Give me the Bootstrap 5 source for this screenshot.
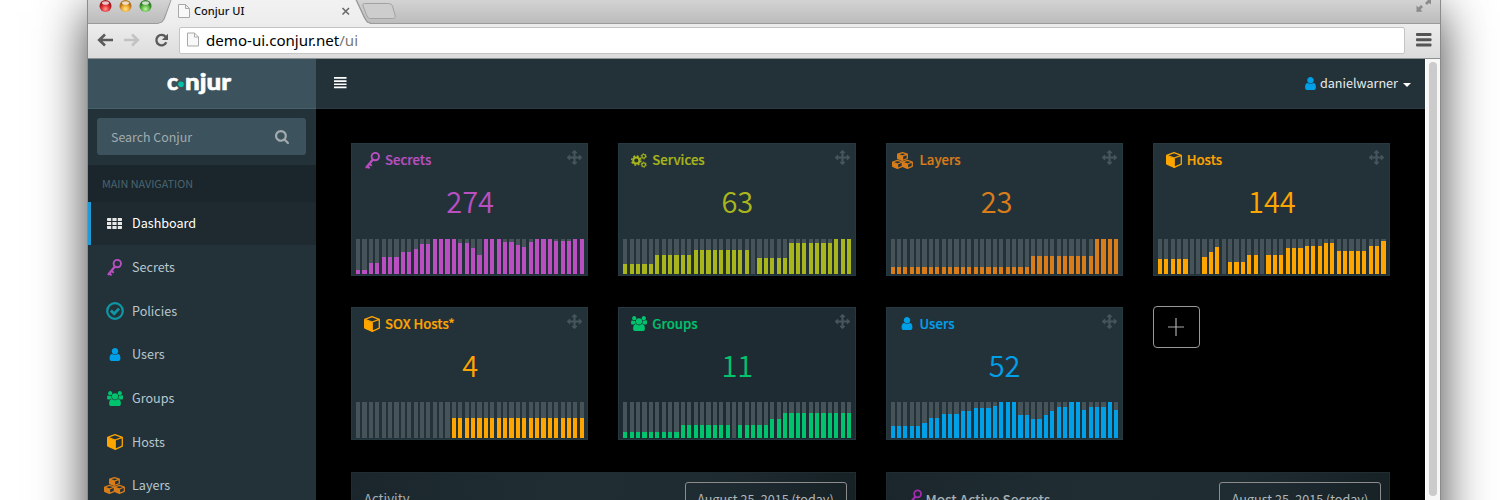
<!DOCTYPE html>
<html lang="en">
<head>
<meta charset="utf-8">
<title>Conjur UI</title>
<link rel="stylesheet" href="https://cdn.jsdelivr.net/npm/bootstrap@5.3.0/dist/css/bootstrap.min.css">
<style>
body{height:500px;overflow:hidden;background:#fff;font-family:"Noto Sans CJK SC","Source Sans Pro",sans-serif;font-size:12.6px;line-height:20px}
svg{display:block;flex:none}
.browser{width:1354px;height:800px;margin-left:87px;border:solid #8b8b8b;border-width:0 1px;box-shadow:0 12px 46px rgba(0,0,0,.75)}
.tabstrip{height:23px;background:linear-gradient(#d3d3d3,#bcbcbc)}
.tab-title{font:500 11.1px/16px "Noto Sans",sans-serif;color:#111;padding:3px 0 0 106px}
.toolbar{height:35.500px;background:linear-gradient(#ededed,#dcdcdc);border-bottom:1px solid #8d9194;padding:0 8px 0 9px}
.address{height:27px;border:1px solid #c4c4c4;border-radius:2px;font:15.1px/22px "Noto Sans",sans-serif;color:#000;padding:0 0 1px 7px}
.address span{color:#777}
.viewport{height:741px;overflow:hidden}
.sidebar{width:228px;background:#233239}
.brand{height:50px;background:#3c535d;border-bottom:1px solid #46606b}
.search{height:37px;margin:9.500px 10px 9.500px 9px;background:#3c535d;border-radius:3px;color:#a3abae;font-size:12.4px;padding:0 17px 0 14px}
.nav-head{height:37px;background:#1a262b;color:#4b646f;font-size:10.8px;padding:0 0 1px 14px}
.side-link{height:43.7px;color:#b8c7ce;border-left:3px solid transparent;padding-left:11px;gap:5px}
.side-link .ico{width:25px}
.side-link.current{color:#fff;background:#1e2a30;border-color:#1f9ad6}
.topbar{height:50px;background:#233239;color:#e8ecee;border-bottom:1px solid #2b3c44;padding:0 14px 0 18px}
.board{background:#000;padding:34.500px 35px 0}
.tiles{display:grid;grid-template-columns:repeat(4,1fr);column-gap:30px;row-gap:30.5px}
.tile{height:133px;background:#233239;border:1px solid #263940;padding:0 3px 0 4px;color:var(--c)}
.tile-top{height:32px;padding-left:3px;font-size:13.2px}
.tile-top .ico{width:26px}
.tile-top b{font-weight:500;-webkit-text-stroke:.2px}
.tile-num{font-size:29px;line-height:36px;font-weight:350;height:36px;margin-top:6px}
.bars{height:35.5px;margin-top:20.5px;justify-content:space-between}
.bars i{width:4.2px;height:100%;background:#465359;display:flex;align-items:flex-end}
.bars u{width:100%;background:var(--c);display:block}
.mover{color:#46555b;margin:-5px 2px 0 0}
.adder{width:47px;height:42px;border:1px solid #999;border-radius:4px;margin-top:-1px}
.panels{display:grid;grid-template-columns:1fr 1fr;gap:30px;margin-top:32px}
.panel{height:200px;background:linear-gradient(100deg,#1a262b,#202e34 40%,#1e2b31 70%,#151f23);color:#a5afb4;font-size:13.2px;padding:9px 8px 0 12px;border:1px solid #1f2d33}
.panel .range{width:162px;height:33px;border:1px solid #8c8c8c;border-radius:3px;color:#b0b7ba;font-size:12.6px;line-height:31px}
.scroller{width:15px;background:#f7f7f7;border-left:1px solid #fff;padding:3px 3px 0}
.thumb{width:8px;height:434px;border-radius:4px;background:#cbcbcb}
</style>
</head>
<body>
<svg width="0" height="0" class="position-absolute">
<defs>
<symbol id="user" viewBox="256 128 1280 1536"><path fill="currentColor" d="M1536 1399q0 109-62.500 187t-150.500 78h-854q-88 0-150.500-78t-62.500-187q0-85 8.500-160.500t31.500-152 58.500-131 94-89 134.500-34.500q131 128 313 128t313-128q76 0 134.500 34.500t94 89 58.500 131 31.500 152 8.500 160.500zm-256-887q0 159-112.500 271.500t-271.500 112.500-271.500-112.500-112.500-271.500 112.500-271.500 271.500-112.500 271.500 112.500 112.500 271.500z"/></symbol>
<symbol id="search" viewBox="64 128 1664 1664"><path fill="currentColor" d="M1216 832q0-185-131.500-316.500t-316.500-131.500-316.500 131.500-131.500 316.500 131.500 316.500 316.500 131.500 316.500-131.500 131.500-316.500zm512 832q0 52-38 90t-90 38q-54 0-90-38l-343-342q-179 124-399 124-143 0-273.500-55.500t-225-150-150-225-55.500-273.500 55.500-273.500 150-225 225-150 273.500-55.500 273.500 55.500 225 150 150 225 55.500 273.500q0 220-124 399l343 343q37 37 37 90z"/></symbol>
<symbol id="move" viewBox="0 0 1792 1792"><path fill="currentColor" d="M1792 896q0 26-19 45l-256 256q-19 19-45 19t-45-19-19-45v-128h-384v384h128q26 0 45 19t19 45-19 45l-256 256q-19 19-45 19t-45-19l-256-256q-19-19-19-45t19-45 45-19h128v-384h-384v128q0 26-19 45t-45 19-45-19l-256-256q-19-19-19-45t19-45l256-256q19-19 45-19t45 19 19 45v128h384v-384h-128q-26 0-45-19t-19-45 19-45l256-256q19-19 45-19t45 19l256 256q19 19 19 45t-19 45-45 19h-128v384h384v-128q0-26 19-45t45-19 45 19l256 256q19 19 19 45z"/></symbol>
<symbol id="groups" viewBox="64 0 1920 1792"><path fill="currentColor" d="M657 896q-162 5-265 128h-134q-82 0-138-40.500t-56-118.500q0-353 124-353 6 0 43.500 21t97.500 42.500 119 21.500q67 0 133-23-5 37-5 66 0 159 93 293zm1071 637q0 120-73 189.500t-194 69.500h-874q-121 0-194-69.500t-73-189.500q0-53 3.500-103.500t14-109 26.500-108.500 43-97.500 62-81 85.500-53.500 111.500-20q10 0 43 21.500t73 48 107 48 135 21.500 135-21.500 107-48 73-48 43-21.500q61 0 111.500 20t85.500 53.500 62 81 43 97.500 26.500 108.500 14 109 3.500 103.500zm-1024-1277q0 106-75 181t-181 75-181-75-75-181 75-181 181-75 181 75 75 181zm704 384q0 159-112.500 271.500t-271.500 112.500-271.500-112.500-112.500-271.500 112.500-271.500 271.500-112.500 271.500 112.500 112.500 271.500zm576 225q0 78-56 118.500t-138 40.500h-134q-103-123-265-128 93-134 93-293 0-29-5-66 66 23 133 23 59 0 119-21.500t97.500-42.500 43.500-21q124 0 124 353zm-128-609q0 106-75 181t-181 75-181-75-75-181 75-181 181-75 181 75 75 181z"/></symbol>
<symbol id="key" viewBox="0 0 15 17"><g fill="none" stroke="currentColor"><circle cx="10.300" cy="4.600" r="3.700" stroke-width="1.900"/><path stroke-width="2.300" d="M8.100 7.200 1 16"/><path stroke-width="1.900" d="M4 11.500l2.800 2.200M1.900 14l2.700 2.200"/></g></symbol>
<symbol id="cube" viewBox="0 0 16 16"><path fill="currentColor" d="M0 3.400 8.200 6.200V16L.8 12.700Q0 12.300 0 11.500z"/><path fill="none" stroke="currentColor" stroke-width="1.300" stroke-linejoin="round" d="M.7 3.300 8 .7l7.300 2.600v8.900L8.200 15.300V6z M15.300 3.300 8.200 6"/></symbol>
<symbol id="cubes" viewBox="0 0 21 17"><g id="c1"><path fill="currentColor" d="M5.200 2.300 10.500 4.300V8.700L5.200 6.500z"/><path fill="none" stroke="currentColor" stroke-width="1.250" stroke-linejoin="round" d="M5.700 2.200 10.500.6l4.800 1.600v4.300l-4.800 2L5.700 6.500zM10.500 4.200v4.300M5.700 2.200l4.800 2 4.800-2"/></g><use href="#c1" x="-5" y="7.800"/><use href="#c1" x="5" y="7.800"/></symbol>
<symbol id="cogs" viewBox="0 0 16 15"><g fill="none" stroke="currentColor"><circle cx="5.300" cy="7.500" r="3.100" stroke-width="2"/><circle cx="5.300" cy="7.500" r="4.600" stroke-width="1.500" stroke-dasharray="1.900 1.713"/><circle cx="12.700" cy="3.300" r="1.800" stroke-width="1.200"/><circle cx="12.700" cy="3.300" r="2.600" stroke-width="1" stroke-dasharray="1.300 1.423"/><circle cx="12.700" cy="11.700" r="1.800" stroke-width="1.200"/><circle cx="12.700" cy="11.700" r="2.600" stroke-width="1" stroke-dasharray="1.300 1.423"/></g></symbol>
<symbol id="check" viewBox="0 0 18 18"><circle cx="9" cy="9" r="7.800" fill="none" stroke="currentColor" stroke-width="2.200"/><path d="M4.900 8.600l3.200 3.200 5-5.200" fill="none" stroke="currentColor" stroke-width="2.800"/></symbol>
<symbol id="grid" viewBox="0 0 15 11"><path fill="currentColor" d="M.8 0h3.400v3H.8A.8.800 0 0 1 0 2.200V.8A.8.800 0 0 1 .8 0zM5.400 0h4.200v3H5.400zM10.800 0h3.400a.8.800 0 0 1 .8.800v1.400a.8.800 0 0 1-.8.800h-3.400zM0 4h4.200v3H0zM5.400 4h4.200v3H5.400zM10.800 4H15v3h-4.200zM0 8h4.200v3H.8a.8.800 0 0 1-.8-.8zM5.400 8h4.200v3H5.400zM10.800 8H15v2.200a.8.800 0 0 1-.8.800h-3.400z"/></symbol>
<symbol id="page" viewBox="0 0 12 14"><path d="M.5.500h7l4 4v9H.5zM7.500.5v4h4" fill="#f8f8f8" stroke="#a9a9a9"/></symbol>
<radialGradient id="red" cy=".75"><stop stop-color="#ff9d92"/><stop offset=".6" stop-color="#e3373a"/><stop offset="1" stop-color="#a81b1e"/></radialGradient>
<radialGradient id="amber" cy=".75"><stop stop-color="#ffe88d"/><stop offset=".6" stop-color="#f0a934"/><stop offset="1" stop-color="#b3741a"/></radialGradient>
<radialGradient id="green" cy=".75"><stop stop-color="#c5f5a5"/><stop offset=".6" stop-color="#62bf4d"/><stop offset="1" stop-color="#377f2b"/></radialGradient>
<linearGradient id="tabfill" x2="0" y2="1"><stop stop-color="#f2f2f2"/><stop offset="1" stop-color="#ededed"/></linearGradient>
</defs>
</svg>

<div class="browser">
  <div class="tabstrip position-relative">
    <svg class="position-absolute top-0 start-0" width="1352" height="24">
      <path d="M0 23.500H70Q74 23 76 19L83.500-1H268L277 18Q279 23.500 283 23.500H1352" fill="none" stroke="#9b9b9b"/>
      <path d="M71 24Q75 23 77 19L84-1H267.500L276 18Q278.500 24 283 24z" fill="url(#tabfill)"/>
      <path d="M267.500-1L276.500 18Q279 23.500 283 23.500" fill="none" stroke="#9b9b9b"/>
      <path d="M276.500 3.500H300.500Q303.500 3.500 304.500 6L307 15Q308 18.500 304.500 18.500H282.500Q280 18.500 279 16L275 6Q274 3.500 276.500 3.500z" fill="#cdcdcd" stroke="#a2a2a2"/>
      <circle cx="17.500" cy="6" r="6" fill="url(#red)"/><circle cx="37.500" cy="6" r="6" fill="url(#amber)"/><circle cx="57.500" cy="6" r="6" fill="url(#green)"/>
      <ellipse cx="17.500" cy="3" rx="3.500" ry="1.800" fill="#fff" opacity=".75"/><ellipse cx="37.500" cy="3" rx="3.500" ry="1.800" fill="#fff" opacity=".75"/><ellipse cx="57.500" cy="3" rx="3.500" ry="1.800" fill="#fff" opacity=".75"/>
      <use href="#page" x="90" y="4" width="12" height="14"/>
      <path d="M254.500 8l6.500 6.500m0-6.500l-6.500 6.500" stroke="#666" stroke-width="1.500"/>
      <path d="M1328.500 12V5.500l2 2 2.500-2.500 2 2-2.500 2.500 2 2zM1343 .0V4.500l-2-1.500-2 2-2-2 3-3z" fill="#8b8b8b"/>
    </svg>
    <div class="tab-title position-relative">Conjur UI</div>
  </div>
  <div class="toolbar d-flex align-items-center">
    <svg width="16" height="14" fill="none" stroke="#5a5a5a" stroke-width="2.600"><path d="M8 1.500 2.200 7 8 12.500M2.500 7H16"/></svg>
    <svg style="margin:0 13px 0 8px" width="20" height="14" fill="none" stroke="#c2c2c2" stroke-width="2.600"><path d="M11 1.500 16.800 7 11 12.500M16.500 7H3"/></svg>
    <svg width="15" height="15" fill="none" stroke="#5a5a5a" stroke-width="2.300"><path d="M11.600 3.800A5.200 5.200 0 1 0 12.300 9.300"/><path d="M14 .8V7H7.800z" fill="#5a5a5a" stroke="none"/></svg>
    <div class="address bg-white flex-grow-1 d-flex align-items-center" style="margin:0 11px 0 10px"><svg width="12" height="15" style="margin-right:7px"><use href="#page"/></svg><div>demo-ui.conjur.net<span>/ui</span></div></div>
    <svg width="16" height="14" fill="#555"><rect y="0" width="15.500" height="3" rx="1"/><rect y="5.200" width="15.500" height="3" rx="1"/><rect y="10.400" width="15.500" height="3" rx="1"/></svg>
  </div>

  <div class="viewport d-flex">
    <aside class="sidebar flex-shrink-0">
      <div class="brand d-flex align-items-center justify-content-center">
        <svg width="66" height="30" style="margin-right:6px" font-family="Lato" font-weight="900" font-size="23" fill="#fff" stroke="#fff" stroke-width=".6"><text x="1" y="22">c</text><circle cx="15" cy="16.200" r="2.800" fill="#00c2a8" stroke="none"/><text x="19" y="22" textLength="46" lengthAdjust="spacingAndGlyphs">njur</text></svg>
      </div>
      <div class="search d-flex align-items-center justify-content-between"><span>Search Conjur</span><svg width="14" height="14"><use href="#search"/></svg></div>
      <div class="nav-head d-flex align-items-center">MAIN NAVIGATION</div>
      <nav id="menu"></nav>
    </aside>
    <main class="flex-grow-1 d-flex flex-column">
      <header class="topbar flex-shrink-0 d-flex align-items-center justify-content-between">
        <svg width="13" height="12" fill="#fff"><path d="M0 0h12.500v1.700H0zM0 3.200h12.500v1.700H0zM0 6.400h12.500v1.700H0zM0 9.600h12.500v1.700H0z"/></svg>
        <div class="d-flex align-items-center"><svg width="11" height="13" style="color:#00a0e9;margin-right:4px"><use href="#user"/></svg>danielwarner<svg width="8" height="4" style="margin:3px 0 0 5px"><path d="M0 0h8L4 4z" fill="#fff"/></svg></div>
      </header>
      <section class="board flex-grow-1">
        <div class="tiles" id="tiles"></div>
        <div class="panels">
          <div class="panel d-flex justify-content-between"><span style="padding-top:7px">Activity</span><div class="range text-center">August 25, 2015 (today)</div></div>
          <div class="panel d-flex justify-content-between"><span class="d-flex" style="padding:7px 0 0 9px"><svg width="14" height="17" style="color:#a62bb0;margin-right:4px"><use href="#key"/></svg><b style="font-weight:500;font-size:13.6px">Most Active Secrets</b></span><div class="range text-center">August 25, 2015 (today)</div></div>
        </div>
      </section>
    </main>
    <div class="scroller flex-shrink-0"><div class="thumb"></div></div>
  </div>
</div>
<script src="https://cdn.jsdelivr.net/npm/bootstrap@5.3.0/dist/js/bootstrap.bundle.min.js"></script>
<script>
const icon = (id, w, h) => `<svg width="${w}" height="${h}"><use href="#${id}"/></svg>`;
const size = {grid:[15,11], key:[15,17], check:[18,18], user:[12,13], groups:[16,15], cube:[16,16], cubes:[21,17], cogs:[16,15]};
const menu = [['Dashboard','grid','#e8e8e8'],['Secrets','key','#b94fc1'],['Policies','check','#0e98a5'],['Users','user','#00a0e9'],['Groups','groups','#00c36e'],['Hosts','cube','#ffa500'],['Layers','cubes','#d87d1a']];
document.getElementById('menu').innerHTML = menu.map(([t, i, c], n) =>
  `<div class="side-link d-flex align-items-center${n ? '' : ' current'}"><span class="ico d-flex justify-content-center" style="color:${c}">${icon(i, ...size[i])}</span>${t}</div>`).join('');

// Each series is a list of [value, number of consecutive days]; 107 is a full bar.
const tiles = [
 ['Secrets',274,'key','#b94fc1',[[13,2],[34,2],[51,3],[67,2],[74,1],[89,2],[107,4],[92,2],[78,1],[58,1],[107,3],[97,2],[87,1],[82,1],[95,1],[107,3],[98,3],[107,2]]],
 ['Services',63,'cogs','#a9b61b',[[31,5],[56,6],[71,9],[0,1],[49,5],[93,7],[107,3]]],
 ['Layers',23,'cubes','#d87d1a',[[20,22],[55,10],[107,4]]],
 ['Hosts',144,'cube','#ffa500',[[46,5],[0,2],[52,1],[66,1],[80,1],[0,1],[35,3],[56,2],[0,1],[58,3],[77,3],[83,3],[93,2],[70,5],[84,2],[98,1]]],
 ['SOX Hosts*',4,'cube','#ffa500',[[0,15],[60,21]]],
 ['Groups',11,'groups','#00c36e',[[17,9],[38,8],[0,1],[38,5],[55,2],[74,11]]],
 ['Users',52,'user','#00a0e9',[[36,5],[44,1],[59,2],[70,3],[80,2],[88,3],[94,1],[107,3],[68,2],[56,2],[68,1],[80,1],[93,2],[107,2],[83,1],[93,3],[107,1],[84,1]]]
];
document.getElementById('tiles').innerHTML = tiles.map(([t, n, i, c, s]) =>
  `<div class="tile" style="--c:${c}${i === 'groups' ? ';background:#1f2b33' : ''}"><div class="tile-top d-flex align-items-center"><span class="ico d-flex justify-content-center${i === 'cubes' ? ' pe-2' : ''}">${icon(i, ...size[i])}</span><b>${t}</b><span class="mover ms-auto">${icon('move',15,15)}</span></div>
  <div class="tile-num text-center${i === 'cubes' ? ' pe-3' : ''}">${n}</div>
  <div class="bars d-flex">${s.flatMap(([v, k]) => Array(k).fill(`<i><u style="height:${(v/1.07).toFixed(1)}%"></u></i>`)).join('')}</div></div>`).join('')
  + '<div class="adder d-flex align-items-center justify-content-center"><svg width="16" height="18" stroke="#aaa" stroke-width="1.200"><path d="M0 9h16M8 0v18"/></svg></div>';
</script>
</body>
</html>
